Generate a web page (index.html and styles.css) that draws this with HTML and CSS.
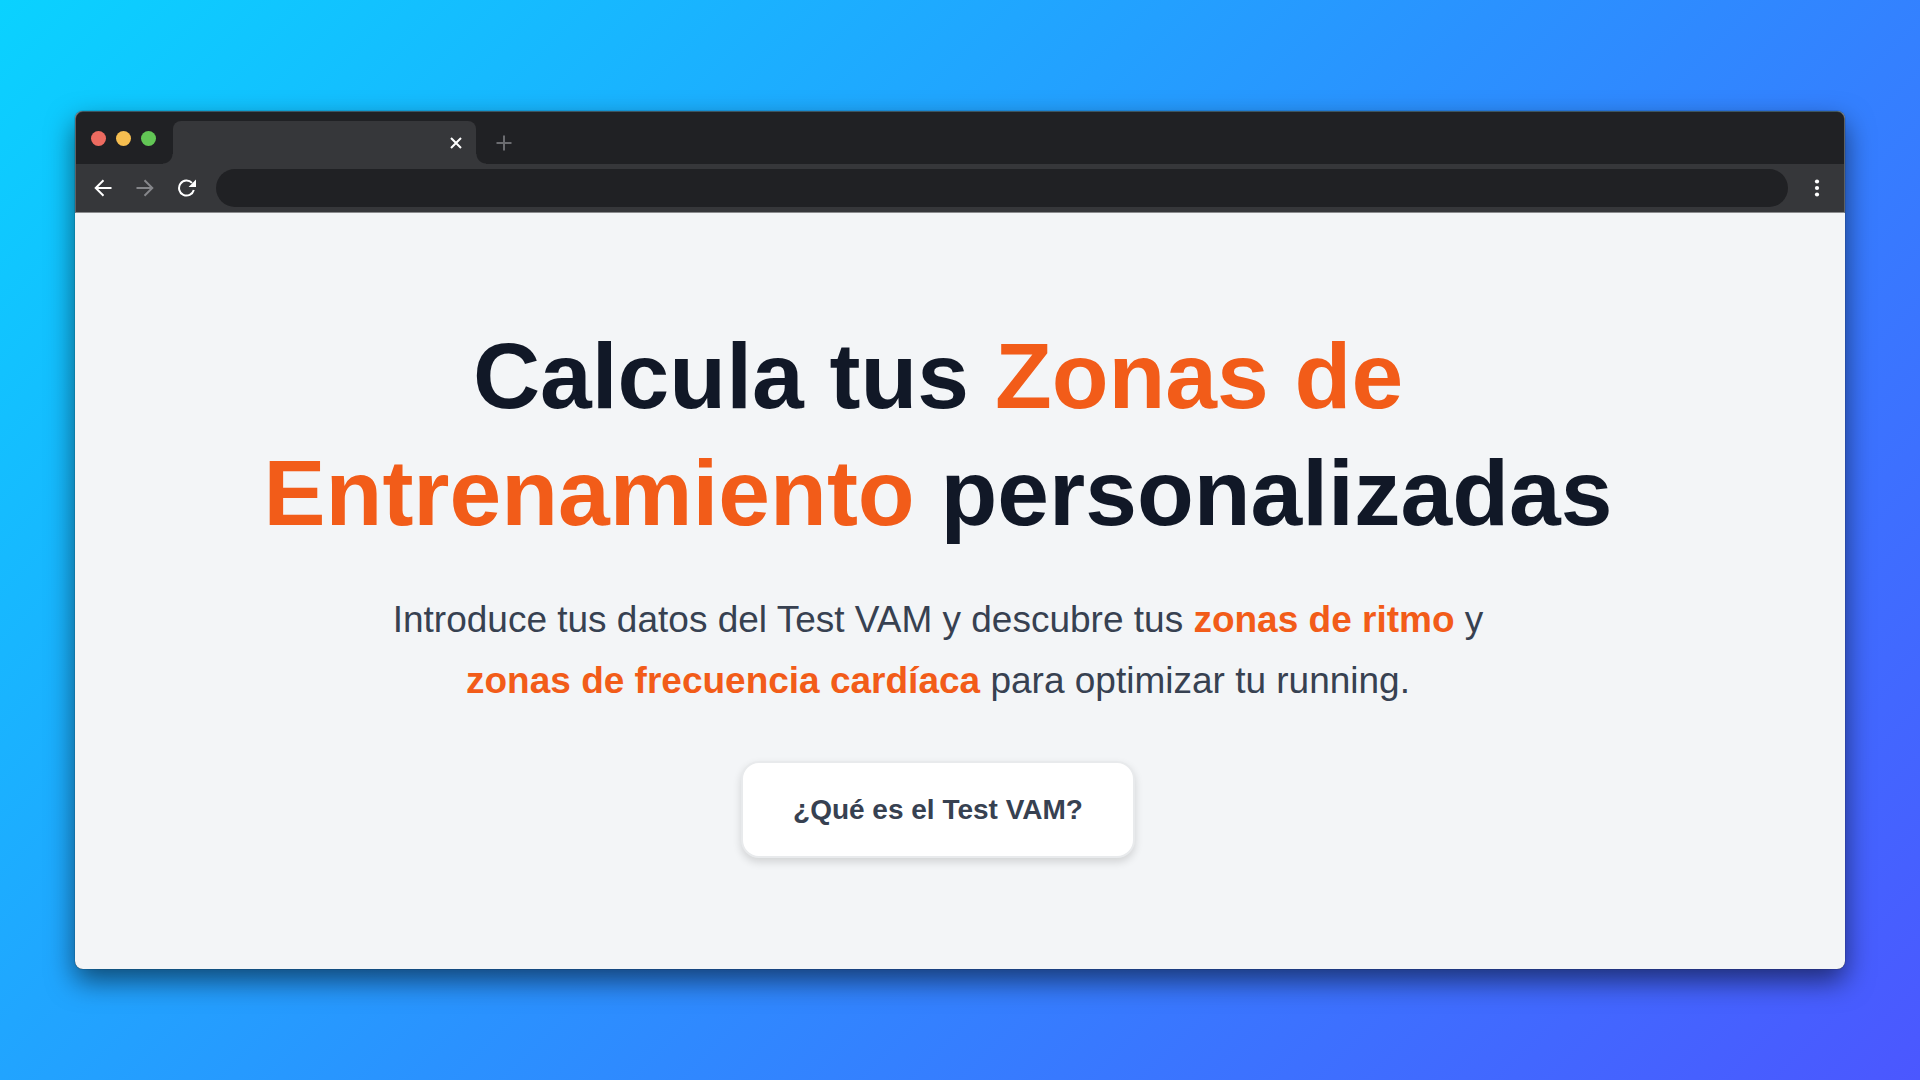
FILE: index.html
```html
<!DOCTYPE html>
<html lang="es">
<head>
    <meta charset="UTF-8">
    <meta name="viewport" content="width=device-width, initial-scale=1">
    <title>Zonas de Entrenamiento</title>
    <link rel="stylesheet" href="styles.css">
</head>
<body>
    <div class="window">
        <header class="chrome">
            <div class="tab-bar">
                <div class="lights">
                    <span class="light red"></span>
                    <span class="light yellow"></span>
                    <span class="light green"></span>
                </div>
                <div class="tab">
                    <button type="button" class="icon-btn" aria-label="Cerrar">
                        <svg width="12" height="12" viewBox="0 0 12 12"><path d="M1 1l10 10M11 1L1 11" stroke="#fff" stroke-width="2"/></svg>
                    </button>
                </div>
                <button type="button" class="icon-btn new-tab" aria-label="Nueva">
                    <svg width="16" height="16" viewBox="0 0 16 16"><path d="M8 .5v15M.5 8h15" stroke="#6b6c70" stroke-width="2"/></svg>
                </button>
            </div>
            <div class="toolbar">
                <button type="button" class="icon-btn" aria-label="Anterior">
                    <svg width="18" height="18" viewBox="0 0 18 18"><path d="M17.5 9H2M9.5 1.2L1.7 9l7.8 7.8" fill="none" stroke="#fff" stroke-width="2"/></svg>
                </button>
                <button type="button" class="icon-btn" aria-label="Siguiente">
                    <svg width="18" height="18" viewBox="0 0 18 18"><path d="M.5 9H16M8.5 1.2L16.3 9l-7.8 7.800" fill="none" stroke="#85868a" stroke-width="2"/></svg>
                </button>
                <button type="button" class="icon-btn" aria-label="Recargar">
                    <svg width="18" height="18" viewBox="0 0 18 18"><path d="M14 3.900A7.500 7.500 0 1 0 15.800 11" fill="none" stroke="#fff" stroke-width="2"/><path d="M18 .6V8h-7.400z" fill="#fff"/></svg>
                </button>
                <input type="text" class="address" aria-label="Dirección">
                <button type="button" class="icon-btn" aria-label="Menú">
                    <svg width="18" height="18" viewBox="0 0 18 18" fill="#fff"><circle cx="9" cy="2.500" r="2.100"/><circle cx="9" cy="9" r="2.100"/><circle cx="9" cy="15.500" r="2.100"/></svg>
                </button>
            </div>
        </header>

        <main class="hero">
            <h1>Calcula tus <span class="accent">Zonas de</span> <span class="accent">Entrenamiento</span> personalizadas</h1>
            <p>Introduce tus datos del Test VAM y descubre tus <strong class="accent">zonas de ritmo</strong> y <strong class="accent">zonas de frecuencia cardíaca</strong> para optimizar tu running.</p>
            <button type="button" class="info-btn">¿Qué es el Test VAM?</button>
        </main>
    </div>
</body>
</html>
```
FILE: styles.css
```css
* {
  box-sizing: border-box;
}

body {
  margin: 0;
  min-height: 100vh;
  padding: 40px 75px;
  display: flex;
  align-items: center;
  font-family: "Liberation Sans", Arial, sans-serif;
  background: linear-gradient(135deg, #0ad2ff 0%, #2a92ff 50%, #4b57ff 100%);
}

/* Browser window */
.window {
  flex: 1;
  border-radius: 8px;
  background-color: #f3f5f7;
  box-shadow: 0 0 1px #000, 0 12px 28px rgba(0, 0, 0, 0.55);
}

.chrome {
  border: 1px solid #5d6165;
  border-top-color: #3c5560;
  border-bottom-color: #8b8c8e;
  border-radius: 8px 8px 0 0;
  background-color: #36373a;
  overflow: hidden;
}

.tab-bar {
  display: flex;
  height: 52px;
  padding-top: 9px;
  background-color: #202124;
}

.lights {
  display: flex;
  gap: 10px;
  padding: 10px 17px 0 15px;
}

.light {
  width: 15px;
  height: 15px;
  border-radius: 50%;
}

.red {
  background-color: #ed6b60;
}

.yellow {
  background-color: #f6be50;
}

.green {
  background-color: #62c655;
}

.tab {
  position: relative;
  display: flex;
  align-items: center;
  justify-content: flex-end;
  width: 303px;
  padding-right: 14px;
  border-radius: 8px 8px 0 0;
  background-color: #36373a;
}

/* Curved feet of the tab */
.tab::before,
.tab::after {
  content: "";
  position: absolute;
  bottom: 0;
  width: 10px;
  height: 10px;
}

.tab::before {
  right: 100%;
  background: radial-gradient(circle at 0 0, #202124 9px, #36373a 10px);
}

.tab::after {
  left: 100%;
  background: radial-gradient(circle at 100% 0, #202124 9px, #36373a 10px);
}

.icon-btn {
  display: flex;
  align-items: center;
  padding: 0;
  border: 0;
  background: none;
}

.new-tab {
  margin-left: 20px;
}

.toolbar {
  display: flex;
  align-items: center;
  gap: 24px;
  height: 48px;
  padding: 0 18px;
}

.address {
  flex: 1;
  height: 38px;
  margin: 0 -4px;
  padding: 0 20px;
  border: 0;
  border-radius: 19px;
  color: #fff;
  background-color: #202124;
}

/* Page content */
.hero {
  display: flex;
  flex-direction: column;
  align-items: center;
  padding: 105px 44px 111px 0;
  text-align: center;
}

h1 {
  max-width: 1400px;
  margin: 0 0 37px;
  font-size: 93px;
  line-height: 117px;
  color: #111827;
}

p {
  max-width: 1160px;
  margin: 0 0 50px;
  font-size: 37px;
  line-height: 61px;
  color: #374151;
}

.accent {
  color: #f25c19;
}

.info-btn {
  height: 97px;
  padding: 0 50px;
  border: 2px solid #e8eaec;
  border-radius: 18px;
  font-family: inherit;
  font-size: 28px;
  font-weight: bold;
  color: #374151;
  background-color: #fff;
  box-shadow: 0 4px 8px rgba(0, 0, 0, 0.14);
}
```
